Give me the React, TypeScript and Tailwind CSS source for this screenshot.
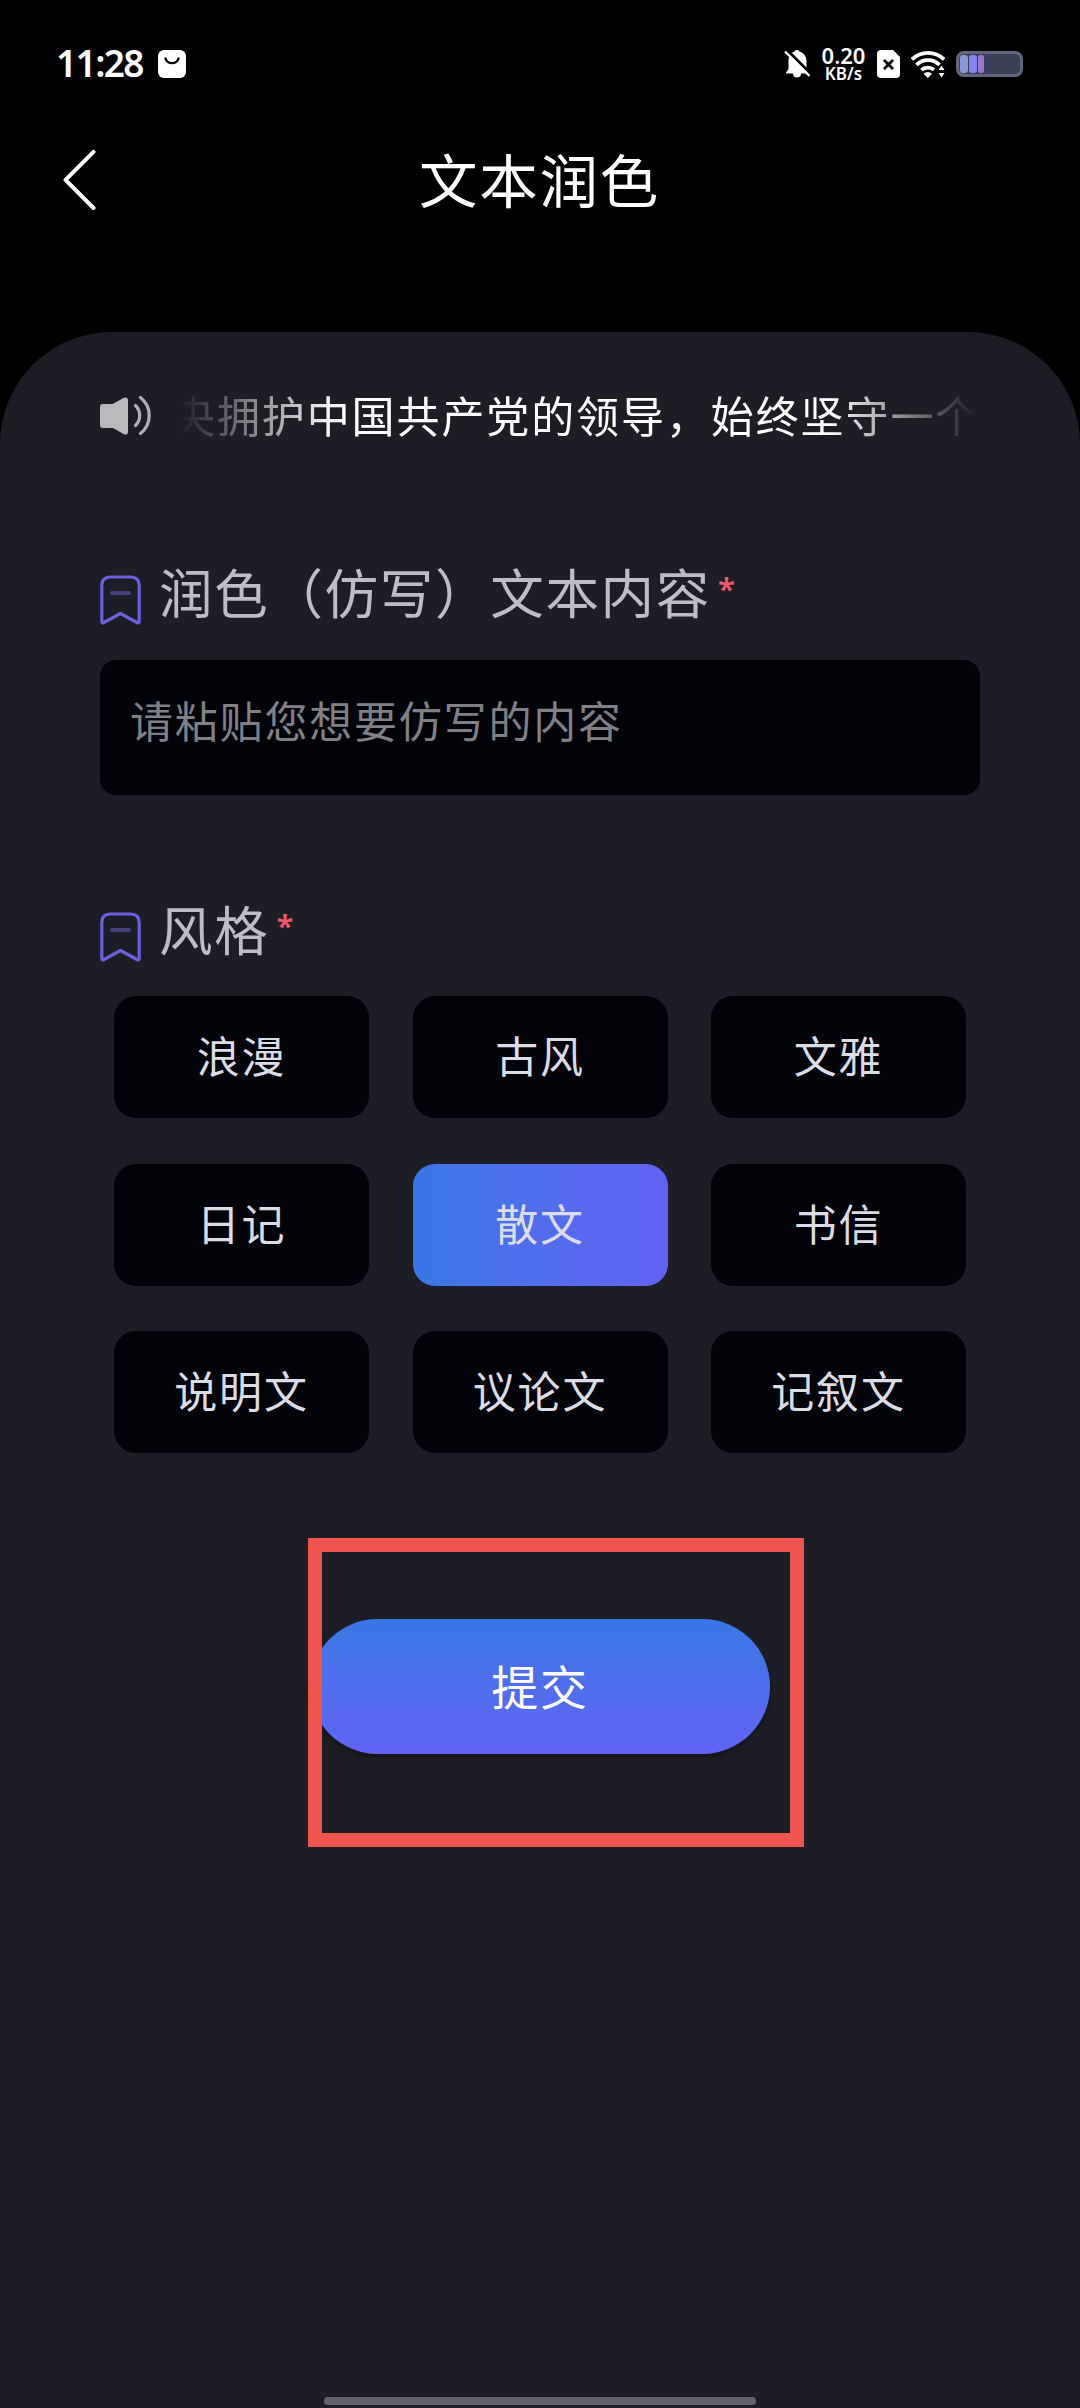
import React, { useState } from 'react';

const STYLES = ['浪漫', '古风', '文雅', '日记', '散文', '书信', '说明文', '议论文', '记叙文'];

const StatusBar: React.FC = () => (
  <div className="flex h-32 items-center justify-between pr-[57px] pl-[56px] text-white">
    <div className="flex items-center">
      <span className="-mt-[3px] w-[102px] font-['Noto_Sans'] text-[37px] leading-none font-semibold tracking-[-1.6px]">11:28</span>
      <svg width="28" height="28" viewBox="0 0 28 28">
        <rect width="28" height="28" rx="6" fill="#fff" />
        <path d="M7.5 8.5a6.6 5.6 0 0 0 13 0" fill="none" stroke="#000" strokeWidth="2.4" strokeLinecap="round" />
      </svg>
    </div>

    <div className="flex items-center">
      <svg className="mr-[10px]" width="27" height="30" viewBox="0 0 27 30">
        <path d="M13 1c1.4 0 2.3.7 2.7 1.7C20 4 22.5 7.5 22.5 12v8l2.5 3.5v1H17a4 4 0 0 1-8 0H2v-1L4.5 20v-8C4.5 7.5 6.5 4 10.3 2.7 10.7 1.700 11.6 1 13 1z" fill="#fff" />
        <path d="M2.5.5l25 25" stroke="#000" strokeWidth="3" />
        <path d="M1 2.5l24.5 24.5" stroke="#fff" strokeWidth="2.2" />
      </svg>
      <div className="mr-[11px] -mt-px flex w-[45px] flex-col items-center font-['Noto_Sans'] font-semibold">
        <span className="text-[22px] leading-[20px]">0.20</span>
        <span className="text-[17px] leading-[18px]">KB/s</span>
      </div>
      <svg className="mr-[11px]" width="23" height="28" viewBox="0 0 23 28">
        <path d="M4 0h12l7 7v17a4 4 0 0 1-4 4H4a4 4 0 0 1-4-4V4a4 4 0 0 1 4-4z" fill="#fff" />
        <path d="M7 10l9 9M16 10l-9 9" stroke="#000" strokeWidth="2.8" />
      </svg>
      <svg className="mr-[11px]" width="34" height="28" viewBox="0 0 34 28">
        <g fill="none" stroke="#fff" strokeWidth="3.8">
          <path d="M1 9.5a22.5 22.5 0 0 1 32 0" />
          <path d="M5.5 15a16 16 0 0 1 23 0" />
          <path d="M10.5 20.2a9.5 9.5 0 0 1 12.5-.4" />
        </g>
        <path d="M12.5 23.8a6 6 0 0 1 8.5 0L16.8 28z" fill="#fff" />
        <path d="M26.5 20.5l4-6 4 6zM26.5 22.5h8l-4 6z" fill="#fff" stroke="#000" strokeWidth="1.2" />
      </svg>
      <div className="flex h-[26px] w-[67px] items-center rounded-[8px] border-[3px] border-[#62657c] bg-[#3a4058] pl-[1px]">
        <span className="h-[18px] w-[8px] rounded-[3px] bg-[#8897d6]" />
        <span className="ml-px h-[18px] w-[8px] rounded-[3px] bg-[#8784ef]" />
        <span className="ml-px h-[18px] w-[6px] rounded-[2px] bg-[#9b78cf]" />
      </div>
    </div>
  </div>
);

const Label: React.FC<{ text: string }> = ({ text }) => (
  <div className="flex h-[72px] items-center">
    <svg className="mt-[18px] mr-[18px]" width="41" height="50" viewBox="0 0 41 50">
      <path
        d="M1.8 46.5V10.5Q1.8 2 10.5 2H30.5Q39.2 2 39.2 10.5V46.5Q39.2 48.7 37 47.5L20.5 38.5L4 47.5Q1.8 48.7 1.8 46.5Z"
        fill="none"
        stroke="#6c60dc"
        strokeWidth="3.2"
        strokeLinejoin="round"
      />
      <path d="M12 18h17" stroke="#46407c" strokeWidth="4" strokeLinecap="round" />
    </svg>
    <span className="text-[53.5px] leading-[74px] tracking-[1.7px] whitespace-nowrap text-[#bdbdc5]">{text}</span>
    <span className="ml-[7px] h-[72px] font-['Noto_Sans'] text-[31px] leading-[67px] font-semibold text-[#f0596c]">*</span>
  </div>
);

const App: React.FC = () => {
  const [content, setContent] = useState('');
  const [selected, setSelected] = useState('散文');

  return (
    <div className="flex h-[2408px] w-[1080px] flex-col overflow-hidden bg-black font-['Noto_Sans_CJK_SC',sans-serif]">
      <StatusBar />

      <header className="flex h-[204px] items-start px-[62px] pt-[21px]">
        <svg className="shrink-0" width="36" height="62" viewBox="0 0 36 62">
          <path d="M31.5 2.8L3.5 30.8L31.5 59" fill="none" stroke="#fff" strokeWidth="4" strokeLinecap="round" strokeLinejoin="round" />
        </svg>
        <h1 className="flex-1 pr-[37px] text-center text-[58.5px] leading-[58px] tracking-[1.8px] text-white">文本润色</h1>
      </header>

      <main className="flex flex-1 flex-col rounded-t-[112px] bg-[#1d1d25] px-[100px]">
        {/* scrolling notice, faded at both ends */}
        <div className="mt-[50px] flex h-[68px] items-center">
          <svg className="mr-[20px] shrink-0" width="52" height="40" viewBox="0 0 52 40">
            <path d="M3 8h9.5L24 1.8Q28 .5 28 4v32q0 3.5-4 2.2L13 32H3q-3 0-3-3V11q0-3 3-3z" fill="#b9babc" />
            <g fill="none" stroke="#aeaeb7" strokeWidth="3.2" strokeLinecap="round">
              <path d="M35.5 9.500a14 14 0 0 1 0 20" />
              <path d="M40.5 1.500a23 23 0 0 1 0 36" />
            </g>
          </svg>
          <div className="w-[820px] shrink-0 overflow-hidden pb-[4px] text-[43px] leading-[64px] tracking-[1.9px] whitespace-nowrap text-white [mask-image:linear-gradient(to_right,transparent_1%,black_20%,black_80%,transparent_98%)]">
            央拥护中国共产党的领导，始终坚守一个
          </div>
        </div>

        <section className="mt-[105px]">
          <Label text="润色（仿写）文本内容" />
          <input
            value={content}
            onChange={e => setContent(e.target.value)}
            placeholder="请粘贴您想要仿写的内容"
            className="mt-[33px] block h-[135px] w-[880px] rounded-[16px] bg-[#020209] px-[30px] pb-[17px] text-[43px] tracking-[1.8px] text-white placeholder:text-[#808087] focus:outline-none"
          />
        </section>

        <section className="mt-[97px]">
          <Label text="风格" />
          <div className="mt-[32px] grid grid-cols-[255px_255px_255px] gap-x-[43.5px] gap-y-[45.5px] pl-[14px]">
            {STYLES.map(item => (
              <button
                key={item}
                type="button"
                onClick={() => setSelected(item)}
                className={`h-[122px] rounded-[22px] pb-[5px] text-[43px] tracking-[1.8px] text-[#dcdce6] ${
                  selected === item ? 'bg-linear-to-r from-[#3977e5] to-[#6162f4]' : 'bg-[#020209]'
                }`}
              >
                {item}
              </button>
            ))}
          </div>
        </section>

        <div className="relative mt-[166px] flex justify-center">
          <button
            type="button"
            className="h-[135px] w-[460px] rounded-full bg-linear-to-b from-[#3777e5] to-[#6063f4] pb-[2px] text-[47px] tracking-[1.8px] text-white shadow-[0_3px_5px_rgba(0,0,0,0.4)]"
          >
            提交
          </button>
          <div className="pointer-events-none absolute top-[-81px] left-[208px] h-[309px] w-[496px] border-[14px] border-[#f0544f]" />
        </div>

        <div className="mt-auto mb-[3px] h-[8px] w-[432px] self-center rounded-full bg-[#636269]" />
      </main>
    </div>
  );
};

export default App;
